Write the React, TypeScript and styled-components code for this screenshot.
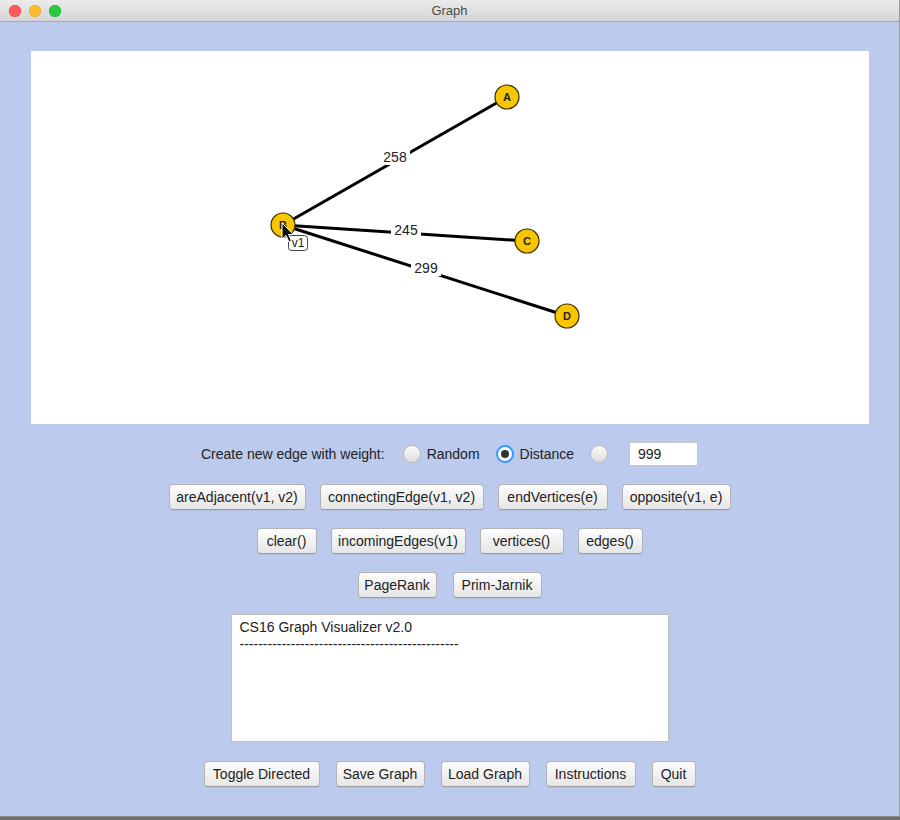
import styled, { createGlobalStyle } from "styled-components";

const GlobalStyle = createGlobalStyle`
  html, body {
    margin: 0;
    padding: 0;
    background: #6e6e6e;
  }
  body {
    font-family: "Liberation Sans", Arial, sans-serif;
    font-size: 14px;
    color: #222;
  }
`;

const Window = styled.div`
  width: 900px;
  height: 817px;
  box-sizing: border-box;
  display: flex;
  flex-direction: column;
  background: #bbcaed;
  border-right: 1px solid #9a9a9a;
  border-bottom: 1px solid #8c8c8c;
  overflow: hidden;
`;

const TitleBar = styled.div`
  height: 22px;
  flex: none;
  position: relative;
  display: flex;
  align-items: center;
  justify-content: center;
  background: linear-gradient(#ececec, #d4d4d4);
  border-bottom: 1px solid #a9a9a9;
  box-sizing: border-box;
  color: #4a4a4a;
  font-size: 13px;
`;

const Lights = styled.div`
  position: absolute;
  left: 9px;
  top: 5px;
  display: flex;
  gap: 8px;
`;

const Light = styled.span<{ $c: string; $b: string }>`
  width: 12px;
  height: 12px;
  border-radius: 50%;
  background: ${(p) => p.$c};
  box-shadow: inset 0 0 0 0.5px ${(p) => p.$b};
`;

const Body = styled.div`
  display: flex;
  flex-direction: column;
  align-items: center;
  padding: 29px 31px 0 31px;
  gap: 18px;
`;

const Canvas = styled.div`
  width: 838px;
  height: 373px;
  background: #fff;
  flex: none;
`;

const WeightRow = styled.div`
  display: flex;
  align-items: center;
  height: 24px;
`;

const Label = styled.span`
  margin-right: 18px;
  color: #222;
`;

const Radio = styled.span<{ $on?: boolean }>`
  width: 18px;
  height: 18px;
  box-sizing: border-box;
  border-radius: 50%;
  display: inline-flex;
  align-items: center;
  justify-content: center;
  background: ${(p) =>
    p.$on ? "#fff" : "linear-gradient(#fbfbfb, #dcdcdc)"};
  border: ${(p) => (p.$on ? "2px solid #3b99fc" : "1px solid #b9b9b9")};
  box-shadow: ${(p) => (p.$on ? "0 0 0 1px #a9cdf6" : "none")};
  &::after {
    content: "";
    display: ${(p) => (p.$on ? "block" : "none")};
    width: 8px;
    height: 8px;
    border-radius: 50%;
    background: #333;
  }
`;

const RadioText = styled.span`
  margin: 0 16px 0 6px;
`;

const Field = styled.div`
  width: 69px;
  height: 24px;
  box-sizing: border-box;
  margin-left: 21px;
  background: #fff;
  border: 1px solid #c6c6c6;
  padding: 3px 8px;
  font-size: 14px;
`;

const ButtonRow = styled.div<{ $gap: number }>`
  display: flex;
  gap: ${(p) => p.$gap}px;
  justify-content: center;
`;

const Button = styled.button<{ $w: number }>`
  width: ${(p) => p.$w}px;
  height: 26px;
  padding: 0;
  font-family: "Liberation Sans", Arial, sans-serif;
  font-size: 14px;
  color: #222;
  background: linear-gradient(#fdfdfd, #e6e6e6);
  border: 1px solid #b3b3b3;
  border-bottom-color: #9d9d9d;
  border-radius: 4px;
  box-shadow: 0 1px 0 rgba(0, 0, 0, 0.05);
`;

const Console = styled.div`
  width: 438px;
  height: 128px;
  box-sizing: border-box;
  margin-top: -2px;
  background: #fff;
  border: 1px solid #bfbfbf;
  padding: 4px 8px;
  font-size: 14px;
  line-height: 17px;
  color: #222;
  white-space: pre;
  overflow: hidden;
`;

const BottomRow = styled(ButtonRow)`
  margin-top: 1px;
`;

type Node = { id: string; x: number; y: number };

const nodes: Node[] = [
  { id: "A", x: 476, y: 46 },
  { id: "B", x: 252, y: 174 },
  { id: "C", x: 496, y: 190 },
  { id: "D", x: 536, y: 265 },
];

const edges = [
  { from: "B", to: "A", w: "258", lx: 364, ly: 106 },
  { from: "B", to: "C", w: "245", lx: 375, ly: 179 },
  { from: "B", to: "D", w: "299", lx: 395, ly: 217 },
];

function Graph() {
  const at = (id: string) => nodes.find((n) => n.id === id)!;
  return (
    <svg width="838" height="373" viewBox="0 0 838 373">
      {edges.map((e) => {
        const a = at(e.from);
        const b = at(e.to);
        return (
          <line
            key={e.w}
            x1={a.x}
            y1={a.y}
            x2={b.x}
            y2={b.y}
            stroke="#000"
            strokeWidth="3"
          />
        );
      })}
      {edges.map((e) => (
        <g key={"l" + e.w}>
          <rect x={e.lx - 15} y={e.ly - 8} width="30" height="16" fill="#fff" />
          <text
            x={e.lx}
            y={e.ly + 5}
            textAnchor="middle"
            fontFamily="Liberation Sans, Arial, sans-serif"
            fontSize="14"
            fill="#222"
          >
            {e.w}
          </text>
        </g>
      ))}
      {nodes.map((n) => (
        <g key={n.id}>
          <circle cx={n.x} cy={n.y} r="12" fill="#f8c600" stroke="#3a3000" strokeWidth="1.2" />
          <text
            x={n.x}
            y={n.y + 4}
            textAnchor="middle"
            fontFamily="Liberation Sans, Arial, sans-serif"
            fontSize="11"
            fontWeight="bold"
            fill="#222"
          >
            {n.id}
          </text>
        </g>
      ))}
      <rect x="257.5" y="184.5" width="19" height="15" rx="3" fill="#fff" stroke="#444" strokeWidth="1" />
      <text
        x="267"
        y="196"
        textAnchor="middle"
        fontFamily="Liberation Sans, Arial, sans-serif"
        fontSize="12"
        fill="#222"
      >
        v1
      </text>
      <path
        d="M251 172 L251 188 L255 184.5 L258 191 L260.5 190 L257.5 183.5 L262.5 183.5 Z"
        fill="#111"
        stroke="#fff"
        strokeWidth="1"
        strokeLinejoin="round"
      />
    </svg>
  );
}

export default function App() {
  return (
    <>
      <GlobalStyle />
      <Window>
        <TitleBar>
          <Lights>
            <Light $c="#fc5b57" $b="#de4540" />
            <Light $c="#fdbc2e" $b="#dea123" />
            <Light $c="#2ac840" $b="#1ea931" />
          </Lights>
          Graph
        </TitleBar>
        <Body>
          <Canvas>
            <Graph />
          </Canvas>
          <WeightRow>
            <Label>Create new edge with weight:</Label>
            <Radio />
            <RadioText>Random</RadioText>
            <Radio $on />
            <RadioText>Distance</RadioText>
            <Radio />
            <Field>999</Field>
          </WeightRow>
          <ButtonRow $gap={14}>
            <Button $w={137}>areAdjacent(v1, v2)</Button>
            <Button $w={164}>connectingEdge(v1, v2)</Button>
            <Button $w={110}>endVertices(e)</Button>
            <Button $w={109}>opposite(v1, e)</Button>
          </ButtonRow>
          <ButtonRow $gap={14}>
            <Button $w={60}>clear()</Button>
            <Button $w={135}>incomingEdges(v1)</Button>
            <Button $w={84}>vertices()</Button>
            <Button $w={65}>edges()</Button>
          </ButtonRow>
          <ButtonRow $gap={16}>
            <Button $w={79}>PageRank</Button>
            <Button $w={89}>Prim-Jarnik</Button>
          </ButtonRow>
          <Console>
            {"CS16 Graph Visualizer v2.0\n" + "-".repeat(47)}
          </Console>
          <BottomRow $gap={16}>
            <Button $w={116}>Toggle Directed</Button>
            <Button $w={89}>Save Graph</Button>
            <Button $w={89}>Load Graph</Button>
            <Button $w={90}>Instructions</Button>
            <Button $w={44}>Quit</Button>
          </BottomRow>
        </Body>
      </Window>
    </>
  );
}
